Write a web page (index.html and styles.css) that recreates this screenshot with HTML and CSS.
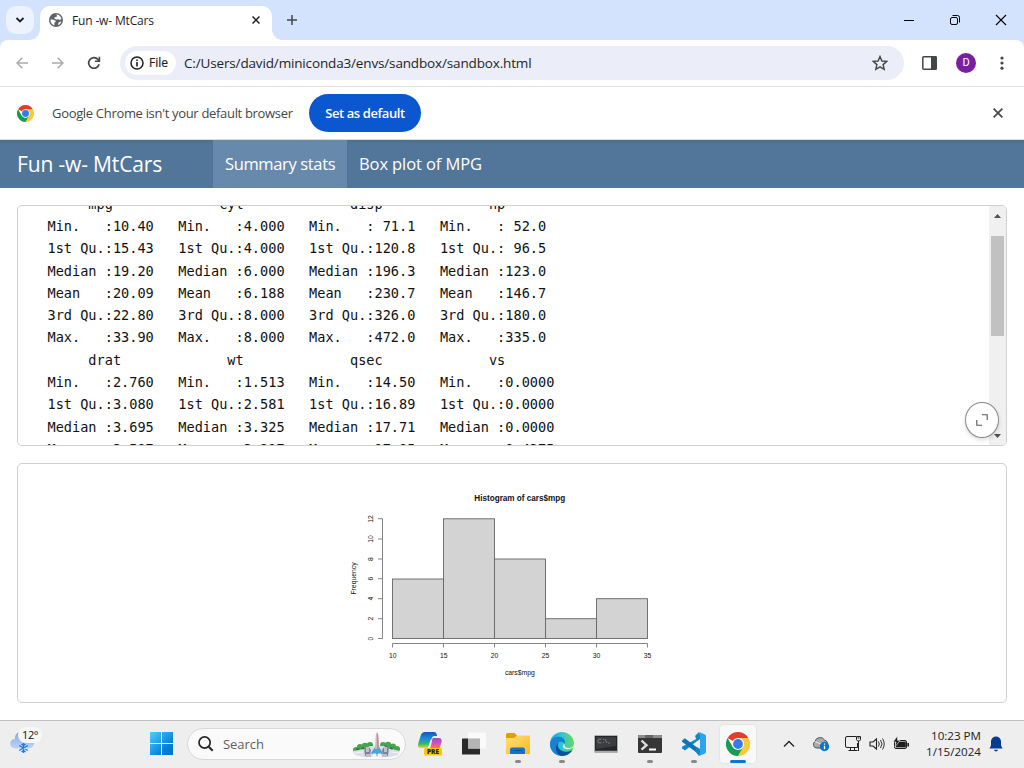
FILE: index.html
```html
<!DOCTYPE html>
<html lang="en">
<head>
<meta charset="utf-8">
<title>Fun -w- MtCars</title>
<link rel="stylesheet" href="styles.css">
</head>
<body>
<div class="screen">
  <header class="tabstrip">
    <div class="tab-search"><svg width="10" height="8" viewBox="0 0 10 8"><path d="M1.5 2 5 5.5 8.5 2" fill="none" stroke="#1f1f1f" stroke-width="1.8"/></svg></div>
    <div class="tab">
      <svg width="14" height="14" viewBox="0 0 14 14"><circle cx="7" cy="7" r="7" fill="#5f6368"/><path d="M1.4 6.8 C3 6.2 5 7 6.2 7.6 C7.8 8.4 6 9.4 5.3 10 L5.4 12.4 C2.7 11.6 1.4 9.4 1.4 6.8Z M6.5 1.5 C9 1.2 11.9 2.8 12.5 5.7 L10.9 6.9 9.2 6.2 7.5 6.5 5.5 5.7 5.6 4.3 7.5 4.1 8.2 2.4Z M9 12.2 9.6 9.4 12.4 8.2 C12 10 10.8 11.5 9 12.2Z" fill="#fff"/></svg>
      <span class="tab-title">Fun -w- MtCars</span>
      <svg class="tab-close" width="8" height="8" viewBox="0 0 8 8"><path d="M.5.5l7 7M7.5.5l-7 7" stroke="#1f1f1f" stroke-width="1.5"/></svg>
    </div>
    <svg class="tab-add" width="12" height="12" viewBox="0 0 12 12"><path d="M6 1v10M1 6h10" stroke="#444746" stroke-width="1.5"/></svg>
    <div class="window-buttons">
      <svg width="46" height="40" viewBox="0 0 46 40"><path d="M18 20.5h10" stroke="#000"/></svg>
      <svg width="46" height="40" viewBox="0 0 46 40"><rect x="18.5" y="17.5" width="7" height="7" rx="1.5" fill="none" stroke="#000"/><path d="M20.5 15.5h5a2 2 0 0 1 2 2v5" fill="none" stroke="#000"/></svg>
      <svg width="46" height="40" viewBox="0 0 46 40"><path d="M18 15l10 10M28 15l-10 10" stroke="#000" stroke-width="1.1"/></svg>
    </div>
  </header>

  <div class="toolbar">
    <svg class="nav-icon" width="12" height="12" viewBox="0 0 12 12"><path d="M12 6H1.2M6.3.8 1.1 6l5.2 5.2" fill="none" stroke="#a9abac" stroke-width="1.5"/></svg>
    <svg class="nav-icon" width="12" height="12" viewBox="0 0 12 12"><path d="M0 6h10.8M5.7.8 10.9 6l-5.2 5.2" fill="none" stroke="#a9abac" stroke-width="1.5"/></svg>
    <svg class="nav-icon" width="14" height="14" viewBox="0 0 14 14"><path d="M12.1 8.2A5.3 5.3 0 1 1 11 3.5L12.3 5" fill="none" stroke="#444746" stroke-width="1.7"/><path d="M12.4.7v4.6H7.9" fill="none" stroke="#444746" stroke-width="1.6"/></svg>
    <div class="omnibox">
      <div class="file-chip">
        <svg width="14" height="14" viewBox="0 0 14 14"><circle cx="7" cy="7" r="6" fill="none" stroke="#1f1f1f" stroke-width="1.5"/><path d="M7 6v4.4M7 3.5v1.5" stroke="#1f1f1f" stroke-width="1.6"/></svg>
        <span class="file-text">File</span>
      </div>
      <span class="url">C:/Users/david/miniconda3/envs/sandbox/sandbox.html</span>
      <svg class="star" width="16" height="16" viewBox="0 0 16 16"><path d="m8 1.5 1.9 4.5 4.9.4-3.7 3.2 1.1 4.8L8 11.9l-4.2 2.5 1.1-4.8L1.2 6.4 6.1 6Z" fill="none" stroke="#444746" stroke-width="1.4"/></svg>
    </div>
    <svg class="side-panel" width="15" height="14" viewBox="0 0 15 14"><rect x=".8" y=".8" width="13.2" height="12.4" rx="1" fill="#fff" stroke="#444746" stroke-width="1.5"/><path d="M9 0h4.5a1.5 1.5 0 0 1 1.5 1.5v11a1.5 1.5 0 0 1-1.5 1.5H9z" fill="#444746"/></svg>
    <div class="avatar">D</div>
    <svg class="kebab" width="4" height="14" viewBox="0 0 4 14"><g fill="#444746"><circle cx="2" cy="2" r="1.6"/><circle cx="2" cy="7" r="1.6"/><circle cx="2" cy="12.2" r="1.6"/></g></svg>
  </div>

  <div class="infobar">
    <svg width="17" height="17" viewBox="0 0 24 24"><use href="#chrome"/></svg>
    <span class="info-text">Google Chrome isn't your default browser</span>
    <div class="default-button"><span>Set as default</span></div>
    <svg class="info-close" width="10" height="10" viewBox="0 0 10 10"><path d="M.6.6l8.8 8.8M9.4.6.6 9.4" stroke="#444746" stroke-width="1.7"/></svg>
  </div>

  <nav class="navbar">
    <div class="brand"><span>Fun -w- MtCars</span></div>
    <div class="nav-item active"><span class="summary">Summary stats</span></div>
    <div class="nav-item"><span class="boxplot">Box plot of MPG</span></div>
  </nav>

  <main class="dashboard">
    <section class="card stats">
<pre>     mpg             cyl             disp             hp
Min.   :10.40   Min.   :4.000   Min.   : 71.1   Min.   : 52.0
1st Qu.:15.43   1st Qu.:4.000   1st Qu.:120.8   1st Qu.: 96.5
Median :19.20   Median :6.000   Median :196.3   Median :123.0
Mean   :20.09   Mean   :6.188   Mean   :230.7   Mean   :146.7
3rd Qu.:22.80   3rd Qu.:8.000   3rd Qu.:326.0   3rd Qu.:180.0
Max.   :33.90   Max.   :8.000   Max.   :472.0   Max.   :335.0
     drat             wt             qsec             vs
Min.   :2.760   Min.   :1.513   Min.   :14.50   Min.   :0.0000
1st Qu.:3.080   1st Qu.:2.581   1st Qu.:16.89   1st Qu.:0.0000
Median :3.695   Median :3.325   Median :17.71   Median :0.0000
Mean   :3.597   Mean   :3.217   Mean   :17.85   Mean   :0.4375</pre>
      <div class="scrollbar">
        <svg width="7" height="4" viewBox="0 0 7 4"><path d="M0 4 3.5 0 7 4z" fill="#505050"/></svg>
        <div class="thumb"></div>
        <svg class="down" width="7" height="4" viewBox="0 0 7 4"><path d="M0 0 3.5 4 7 0z" fill="#505050"/></svg>
      </div>
      <div class="expand"><svg width="12" height="12" viewBox="0 0 12 12"><path d="M6 .8h5.2V6M.8 6v5.2H6" fill="none" stroke="#555" stroke-width="1.1"/></svg></div>
    </section>
    <section class="card plot">
      <svg width="330" height="205" viewBox="340 480 330 205">
        <text class="plot-title" x="519.8" y="500.7" text-anchor="middle" textLength="91" lengthAdjust="spacingAndGlyphs">Histogram of cars$mpg</text>
        <g fill="#d3d3d3" stroke="#666" stroke-width=".9">
          <rect x="392.5" y="579" width="51" height="59.5"/><rect x="443.5" y="518.8" width="51" height="119.7"/><rect x="494.5" y="559" width="51" height="79.5"/><rect x="545.5" y="618.7" width="51" height="19.8"/><rect x="596.5" y="598.7" width="51" height="39.8"/>
        </g>
        <path d="M382.5 518.7V638.5M378 518.7h4.5M378 539h4.5M378 559h4.5M378 578.7h4.5M378 598.7h4.5M378 618.7h4.5M378 638.5h4.5M392.5 643.5h255M392.5 643.5v4M443.5 643.5v4M494.5 643.5v4M545.5 643.5v4M596.5 643.5v4M647.5 643.5v4" fill="none" stroke="#777" stroke-width=".9"/>
        <g class="plot-labels" text-anchor="middle">
          <text x="392.7" y="658">10</text><text x="443.7" y="658">15</text><text x="494.5" y="658">20</text><text x="545.5" y="658">25</text><text x="596.5" y="658">30</text><text x="647.5" y="658">35</text>
          <text x="519.8" y="674.7">cars$mpg</text>
          <text transform="translate(372.5 638.5) rotate(-90)">0</text><text transform="translate(372.5 618.7) rotate(-90)">2</text><text transform="translate(372.5 598.7) rotate(-90)">4</text><text transform="translate(372.5 578.7) rotate(-90)">6</text><text transform="translate(372.5 559) rotate(-90)">8</text><text transform="translate(372.5 539) rotate(-90)">10</text><text transform="translate(372.5 518.9) rotate(-90)">12</text>
          <text transform="translate(356.3 578.5) rotate(-90)">Frequency</text>
        </g>
      </svg>
    </section>
  </main>

  <footer class="taskbar">
    <div class="weather">
      <svg width="32" height="28" viewBox="0 0 32 28"><path d="M7 20.5a4.8 4.8 0 0 1 0-9.6 6.2 6.2 0 0 1 12-3 6.3 6.3 0 0 1 2 12.6z" fill="url(#cloud)"/><path d="M15.5 15v10M11.2 17.5l8.6 5M19.8 17.5l-8.6 5M13.5 16l2 1.5 2-1.5M13.5 24l2-1.5 2 1.5" fill="none" stroke="#2179e5" stroke-width="1.3"/></svg>
      <span class="temperature">12°</span>
    </div>
    <svg class="start" width="24" height="24" viewBox="0 0 24 24"><path d="M0 0h11v11H0zM12 0h11v11H12zM0 12h11v11H0zM12 12h11v11H12z" fill="url(#windows)"/></svg>
    <div class="search">
      <svg width="16" height="16" viewBox="0 0 16 16"><circle cx="6.6" cy="6.5" r="5.6" fill="none" stroke="#262626" stroke-width="1.7"/><path d="m10.7 10.7 4 4" stroke="#262626" stroke-width="2"/></svg>
      <span class="search-text">Search</span>
      <svg class="monument" width="50" height="26" viewBox="0 0 50 26">
        <g fill="#46a64e"><circle cx="4" cy="18" r="3"/><circle cx="8" cy="15" r="3"/><circle cx="13" cy="14" r="3.2"/><circle cx="18" cy="13" r="3"/><circle cx="31" cy="13" r="3"/><circle cx="36" cy="13" r="3.2"/><circle cx="41" cy="14.5" r="3"/><circle cx="45" cy="17" r="3"/></g>
        <g fill="#247237"><circle cx="6" cy="18" r="1.7"/><circle cx="11" cy="17" r="1.8"/><circle cx="19" cy="15" r="1.7"/><circle cx="33" cy="15" r="1.7"/><circle cx="39" cy="17" r="1.8"/></g>
        <path d="m1 19 11-2 6-3h14l6 3 10 2-2 4-8 2H11l-8-2z" fill="#dedde7"/><path d="M12 15h5l2 3-1 6h-5zM32 15h5l-1 9h-5l-1-6z" fill="#7f8498"/><path d="M14 15h3v5h-3zM32 15h3v5h-3zM14 22h5v3h-5zM30 22h5v3h-5z" fill="#bfc0ce"/><path d="m23 15 4 0 4 6-3 3h-6l-3-3z" fill="#4aa6d9"/><path d="m23 17 .8-14L25 0l1.2 3 .8 14z" fill="#d5b6ba"/><path d="M25 0v17h2l-.8-14z" fill="#ad919f"/><path d="m3 21 8-1M39 20l8 1M21 22h3v3h-3zM26 22h3v3h-3z" fill="#f5f4f8" stroke="#f5f4f8"/>
      </svg>
    </div>
    <div class="apps">
      <div class="app"><svg width="24" height="24" viewBox="0 0 24 24"><path d="M7 0h9c2 0 2.8 2 3.2 4h-3c-1.6 0-2 1-2.6 3l-2 6c-.7 2-1.6 3-4 3H3c-3 0-3.5-2-2.7-4.5l2.4-8C3.5 1.3 4.7 0 7 0z" fill="url(#copilotA)"/><path d="M15 6h5.5c3 0 3.7 2 2.8 4.8L21 18H9c2 0 3-1.2 3.6-3l1-4.3c.3-1.7.3-3.4 1.4-4.7z" fill="url(#copilotB)"/><path d="m14 7-3 9h-1l2.6-8z" fill="#fff"/><rect x="6" y="16" width="18" height="7.5" rx="1.5" fill="#ffc40c"/><text class="pre" x="15" y="22.3" text-anchor="middle">PRE</text></svg></div>
      <div class="app"><svg width="24" height="24" viewBox="0 0 24 24"><rect x="0" y="6.5" width="18" height="16" rx=".6" fill="#2a2a2a"/><rect x="6" y=".5" width="18" height="16" rx=".6" fill="#fafafa" opacity=".96"/><path d="M6 6.5h12v10H6z" fill="#b4b4b4"/></svg></div>
      <div class="app"><svg width="24" height="24" viewBox="0 0 24 24"><path d="M0 2.5Q0 1 1.5 1h7L11 3.5l-2 4H0z" fill="#dea000"/><path d="M0 6h8l3-2.5h13V22H0z" fill="url(#folder)"/><path d="M4 22v-4.5Q4 15.5 6 15.5h11q2 0 2 2V22z" fill="#1173cc"/><path d="M8 18.5h8" stroke="#0756a0"/></svg><i></i></div>
      <div class="app"><svg width="24" height="24" viewBox="0 0 24 24"><circle cx="12" cy="12" r="12" fill="url(#edge)"/><path d="M0 11.5C1 6.5 5.5 4.2 9.5 4.8c4.3.6 6.5 3.8 5 7.4-.7-1.8-2.3-3-4.7-2.4-4 1-4.3 8.5 1.8 13.7C5 24 0 18.5 0 11.5z" fill="#1683d2"/><path d="M9 10.2c-4 3.5 1.5 12 11.5 8.8l2-1.2C20.3 22 16.3 24 12 24 4.8 22.8 4.3 12.6 9 10.2z" fill="#0c4f9e"/><path d="M13.2 11c1.4 1.6-.6 2.6-.2 4 .7 2.3 5.8 3 9.8.8 1-.8 1.2-2 1.2-3.8-.8 3.8-4.4 4.5-7 3.8-2.8-.7-1.5-3-3.8-4.8z" fill="#eee"/></svg><i></i></div>
      <div class="app"><svg width="24" height="24" viewBox="0 0 24 24"><rect x=".5" y="3.5" width="23" height="17" rx="1" fill="#252629" stroke="#b2b2b2"/><path d="M2 5h20v9L2 17z" fill="#3c3d40"/><path d="M7.5 7.2H5a1 1 0 0 0-1 1v1.6a1 1 0 0 0 1 1h2.5M9 7.5h1M9 10.2h1M11 7l2 4M14 11h2" fill="none" stroke="#999" stroke-width=".7"/><path d="M1 19.5h22" stroke="#aaa" stroke-width="1.5"/></svg></div>
      <div class="app"><svg width="24" height="24" viewBox="0 0 24 24"><rect y="3" width="24" height="18" rx="1" fill="#363636"/><path d="M1 3h22l1 1v2H0V4z" fill="#8d8d8d"/><path d="M7 3h8v3H7z" fill="#666"/><path d="m3.5 8.5 5 4.7-5 4.5" fill="none" stroke="#ddd" stroke-width="2.4"/><path d="M11 17.5h7" stroke="#fff" stroke-width="2"/></svg><i></i></div>
      <div class="app"><svg width="24" height="24" viewBox="0 0 24 24"><path d="m18 5-1.6 3L3 18.5 0 16.5v-1.8z" fill="#1485ca"/><path d="m0 8.8 2.8-2.5L18 17.8V23L0 9.8z" fill="#0874b9"/><path d="m17 0 6 2.5 1 1.2v16.6l-1 1.2-6 2.5 1-2V2z" fill="#2aa5ed"/><path d="m17 0 1 3v4l-3 2-2-5zM13 19l2-4 3 2v5l-1 2z" fill="#1485ca"/></svg><i></i></div>
      <div class="app current"><svg width="24" height="24" viewBox="0 0 24 24"><g id="chrome"><circle cx="12" cy="12" r="12" fill="#fff"/><path d="M12 12 1.6 6A12 12 0 0 1 22.4 6z" fill="#e33b2e"/><path d="M12 6h10.4A12 12 0 0 1 12 24l5.2-9z" fill="#fcc934"/><path d="M1.6 6 6.8 15 12 18l5.2-3L12 24A12 12 0 0 1 1.6 6z" fill="#169c55"/><circle cx="12" cy="12" r="6" fill="#fff"/><circle cx="12" cy="12" r="4.9" fill="#347bec"/></g></svg><i></i></div>
    </div>
    <div class="tray">
      <svg class="chevron" width="12" height="8" viewBox="0 0 12 8"><path d="m1 6.5 5-5 5 5" fill="none" stroke="#222" stroke-width="1.3"/></svg>
      <svg class="onedrive" width="17" height="16" viewBox="0 0 17 16"><path d="M4 12A3.5 3.5 0 0 1 2 5.5 5.2 5.2 0 0 1 11.5 4 4 4 0 0 1 14 10l-4 2z" fill="#aaa" stroke="#555"/><path d="m2 5.5 8 3.5" stroke="#eee"/><circle cx="11.5" cy="10.5" r="4.7" fill="#0875d1"/><path d="M11.5 9.7v3.5M11.5 7.5v1.3" stroke="#fff" stroke-width="1.3"/></svg>
      <svg class="network" width="17" height="17" viewBox="0 0 17 17"><path d="M11 1.5H2Q.5 1.5.5 3v8q0 1.5 1.5 1.5h10.5V8M3.5 15.5h9M5.5 12.5v3M9.5 12.5v3M13.5 6v10M11.5 1.5h4v3l-1 1.5h-2l-1-1.5zM12.5 3h2" fill="none" stroke="#202020"/></svg>
      <svg class="volume" width="16" height="14" viewBox="0 0 16 14"><path d="M1 5h3l3.5-3v10L4 9H1z" fill="none" stroke="#202020" stroke-width="1.1"/><path d="M9.5 4.5q1.5 2.5 0 5M11.5 3q3 4 0 8M13.5 1.5q3.5 5.5 0 11" fill="none" stroke="#303030"/></svg>
      <svg class="battery" width="17" height="15" viewBox="0 0 17 15"><rect x="1.5" y="4.5" width="12" height="8" rx="1.5" fill="#eee" stroke="#1d1d1d"/><rect x="2.8" y="5.6" width="10" height="5.8" fill="#1d1d1d"/><path d="M15.2 7v3.5" stroke="#1d1d1d" stroke-width="1.6"/><path d="M4.5 0 0 6h3l-1 5 5-6.5H4.5z" fill="#1d1d1d" stroke="#eee" stroke-width=".6"/></svg>
      <div class="clock"><span class="time">10:23 PM</span><span class="date">1/15/2024</span></div>
      <svg class="bell" width="14" height="16" viewBox="0 0 14 16"><path d="M7 .5a5 5 0 0 1 5 5v4l1.5 3H.5l1.5-3v-4a5 5 0 0 1 5-5zM5 13.8h4q-.3 1.8-2 1.8t-2-1.8z" fill="#073b91"/></svg>
    </div>
    <svg class="defs" width="0" height="0"><defs>
      <linearGradient id="windows" x2="1" y2="1"><stop stop-color="#4dd0fb"/><stop offset=".7" stop-color="#0580dd"/><stop offset="1" stop-color="#006fca"/></linearGradient>
      <linearGradient id="cloud" x2="0" y2="1"><stop stop-color="#7fa9ee"/><stop offset="1" stop-color="#bdd3f6"/></linearGradient>
      <linearGradient id="folder" x2="1" y2="1"><stop stop-color="#ffe07a"/><stop offset="1" stop-color="#fbb920"/></linearGradient>
      <linearGradient id="edge" x2="1"><stop stop-color="#189fd8"/><stop offset=".5" stop-color="#30c7d1"/><stop offset="1" stop-color="#65dc50"/></linearGradient>
      <linearGradient id="copilotA" x2="0" y2="1"><stop stop-color="#1653c4"/><stop offset=".4" stop-color="#178cdb"/><stop offset=".75" stop-color="#36b871"/><stop offset="1" stop-color="#edd91e"/></linearGradient>
      <linearGradient id="copilotB" x2="0" y2="1"><stop stop-color="#9749d9"/><stop offset=".6" stop-color="#ee5c90"/><stop offset="1" stop-color="#ff7955"/></linearGradient>
    </defs></svg>
  </footer>
</div>
</body>
</html>
```

FILE: styles.css
```css
* { box-sizing: border-box; }
body { margin: 0; font-family: "Open Sans", "Noto Sans", sans-serif; }
svg { display: block; flex: none; }
span { white-space: nowrap; }
.screen { width: 1024px; height: 768px; overflow: hidden; display: flex; flex-direction: column; background: #fff; }
.tabstrip { height: 40px; flex: none; display: flex; background: #d3e3fd; box-shadow: 0 8px 0 #d3e3fd; }
.tab-search { width: 28px; height: 28px; margin: 6px 0 0 6px; border-radius: 10px; background: #ecf2fe; display: grid; place-items: center; }
.tab { position: relative; width: 232px; height: 34px; margin: 6px 0 0 6px; padding: 0 12px 6px 9px; border-radius: 10px 10px 0 0; background: #fff; display: flex; align-items: center; }
.tab::before, .tab::after { content: ""; position: absolute; bottom: 0; width: 10px; height: 10px; }
.tab::before { left: -10px; background: radial-gradient(circle at 0 0, transparent 9.5px, #fff 10px); }
.tab::after { right: -10px; background: radial-gradient(circle at 100% 0, transparent 9.5px, #fff 10px); }
.tab-title { margin-left: 9px; font-size: 12px; letter-spacing: -.16px; color: #1f1f1f; }
.tab-close { margin-left: auto; }
.tab-add { margin: 14px 0 0 14px; }
.window-buttons { display: flex; margin-left: auto; }
.toolbar { height: 47px; flex: none; display: flex; align-items: center; padding: 0 20px 1px 16px; border-bottom: 1px solid #dfe1e4; background: #fff; border-radius: 8px 8px 0 0; position: relative; }
.nav-icon { margin-right: 24px; }
.nav-icon:nth-child(2) { margin-right: 23px; }
.nav-icon:nth-child(3) { margin-right: 19px; }
.omnibox { width: 784px; height: 34px; border-radius: 17px; background: #ebeef8; display: flex; align-items: center; padding: 0 16px 0 5px; }
.file-chip { width: 51px; height: 24px; border-radius: 12px; background: #fff; display: flex; align-items: center; padding-left: 5px; }
.file-text { margin-left: 5px; font-size: 12px; color: #1f1f1f; font-weight: 500; -webkit-text-stroke: .2px #1f1f1f; }
.url { margin-left: 8px; font-size: 13.5px; letter-spacing: -.15px; color: #1f1f1f; }
.star { margin-left: auto; }
.side-panel { margin-left: 18px; }
.avatar { width: 20px; height: 20px; margin-left: 19px; border-radius: 50%; background: #7b1fa2; color: #fff; font: 11px/20px Roboto, sans-serif; text-align: center; }
.kebab { margin-left: auto; }
.infobar { height: 53px; flex: none; display: flex; align-items: center; padding: 0 21px 0 17px; border-bottom: 1px solid #dadce0; }
.info-text { width: 241px; margin-left: 18px; font-size: 13px; letter-spacing: -.32px; color: #444746; }
.default-button { width: 112px; height: 38px; margin-left: 16px; border-radius: 19px; background: #0b57d0; color: #fff; display: grid; place-items: center; font-size: 13px; font-weight: 600; letter-spacing: -.4px; }
.info-close { margin-left: auto; }
.navbar { height: 48px; flex: none; display: flex; background: linear-gradient(#4b6e8e, #517699 4px); color: #fff; }
.brand { width: 213px; padding-left: 17px; font-size: 21px; line-height: 49px; letter-spacing: -.15px; }
.nav-item { padding: 0 12px; font-size: 16.5px; line-height: 48px; letter-spacing: -.1px; }
.nav-item.active { width: 134px; background: #678aac; letter-spacing: -.36px; }
.dashboard { flex: 1; padding: 17px 17px 17px; display: flex; flex-direction: column; gap: 17px; }
.card { position: relative; border: 1px solid #d0d0d0; border-radius: 5px; background: #fff; overflow: hidden; }
.stats { height: 241px; display: flex; justify-content: space-between; }
.stats pre { margin: -13.4px 0 0 29.5px; height: 252px; font-family: "DejaVu Sans Mono", monospace; font-size: 13.58px; line-height: 22.32px; color: #111; }
.scrollbar { width: 17px; background: #f0f0f0; display: flex; flex-direction: column; align-items: center; padding: 8px 0 7px; }
.thumb { width: 13px; height: 100px; margin-top: 18px; background: #c1c1c1; }
.down { margin-top: auto; }
.expand { position: absolute; right: 7px; bottom: 7px; width: 34px; height: 36px; border: 1px solid #888; border-radius: 50%; background: #fff; display: grid; place-items: center; box-shadow: 0 2px 4px #0002; }
.plot { height: 240px; padding: 16px 0 0 322px; }
.plot text { font-family: "Liberation Sans", Arial, sans-serif; fill: #111; }
.plot-title { font-size: 8.3px; font-weight: bold; }
.plot-labels { font-size: 6.8px; }
.taskbar { height: 48px; flex: none; display: flex; align-items: center; padding-bottom: 2px; background: #eee; border-top: 1px solid #bfbfbf; }
.weather { position: relative; width: 150px; height: 36px; padding: 2px 0 0 8px; }
.temperature { position: absolute; left: 18px; top: 1px; width: 24px; height: 16px; border-radius: 8px; background: #f7f7f7; font-size: 11px; line-height: 16px; text-align: center; letter-spacing: -.5px; color: #111; }
.search { width: 219px; height: 32px; margin-left: 13px; padding: 0 3px 0 10px; border: 1px solid #d8d8d8; border-radius: 16px; background: #fafafa; display: flex; align-items: center; }
.search-text { margin-left: 9px; font-size: 13px; letter-spacing: -.05px; color: #5f5f5f; }
.monument { margin: 2px 0 0 auto; }
.apps { display: flex; align-items: center; gap: 6px; margin-left: 5px; }
.app { position: relative; width: 38px; height: 40px; display: grid; place-items: center; }
.app i { position: absolute; bottom: 1px; left: 16px; width: 6px; height: 3px; border-radius: 2px; background: #888; }
.app.current { background: #f8f8f8; border: 1px solid #e5e5e5; border-radius: 4px; }
.app.current i { left: 10px; width: 16px; bottom: 0; background: #0877d1; }
.app .pre { font: 800 6.5px "Open Sans", sans-serif; fill: #222; }
.tray { display: flex; align-items: center; flex: 1; }
.chevron { margin-left: 26px; }
.onedrive { margin-left: 18px; }
.network { margin-left: 15px; }
.volume { margin-left: 7px; }
.battery { margin-left: 8px; }
.clock { width: 58px; margin-left: 13px; display: flex; flex-direction: column; align-items: flex-end; font-size: 11.6px; line-height: 16px; color: #202020; }
.bell { margin-left: 8px; }
.defs { position: absolute; }
```
